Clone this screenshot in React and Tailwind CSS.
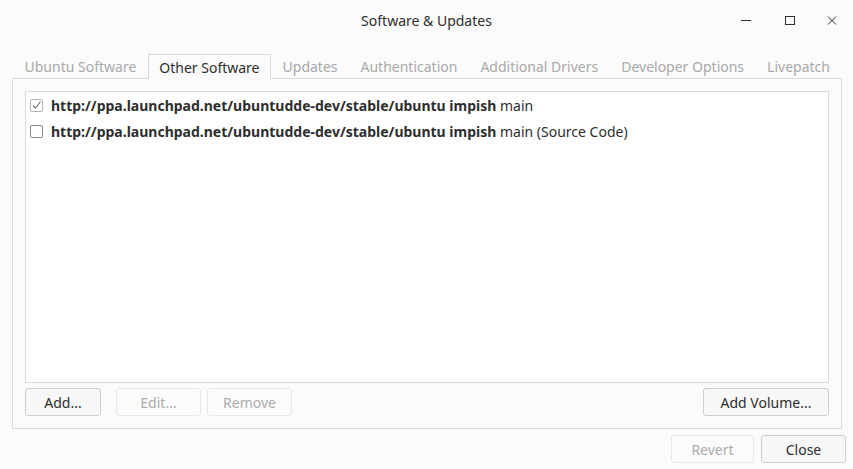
import React from "react";

const font = { fontFamily: '"Noto Sans", "Open Sans", sans-serif' };

function Tab({ label, active }) {
  if (active) {
    return (
      <div className="h-[25px] px-[10.5px] flex items-center border border-b-0 border-[#d8d8d8] bg-[#fbfbfb] text-[#2e2e2e] -mb-px relative z-10">
        {label}
      </div>
    );
  }
  return (
    <div className="h-[24px] px-[10.5px] flex items-center text-[#a9a9a9] border border-transparent">
      {label}
    </div>
  );
}

function Btn({ children, disabled, className = "" }) {
  return (
    <div
      className={
        "h-[28px] flex items-center justify-center rounded-[3px] border text-[14px] " +
        (disabled
          ? "border-[#e8e8e8] bg-[#fbfbfb] text-[#ababab] "
          : "border-[#cdcdcd] bg-[#f7f7f7] text-[#2e2e2e] ") +
        className
      }
    >
      {children}
    </div>
  );
}

export default function App() {
  return (
    <div
      className="w-[853px] h-[469px] bg-[#fbfbfb] flex flex-col text-[14px] text-[#2e2e2e] overflow-hidden"
      style={font}
    >
      {/* Title bar */}
      <div className="h-[40px] grid grid-cols-[1fr_auto_1fr] items-center">
        <div />
        <div className="text-[14px] text-[#2e2e2e]">Software &amp; Updates</div>
        <div className="flex justify-end items-center pr-[11px]">
          <svg width="20" height="20" viewBox="0 0 20 20">
            <line x1="5" y1="10.5" x2="15" y2="10.5" stroke="#2e2e2e" strokeWidth="1" />
          </svg>
          <svg width="20" height="20" viewBox="0 0 20 20" className="ml-[24px]">
            <rect x="5.5" y="6.5" width="9" height="8" fill="none" stroke="#2e2e2e" strokeWidth="1" />
          </svg>
          <svg width="20" height="20" viewBox="0 0 20 20" className="ml-[22px]">
            <path d="M6 6.5 L14 14.5 M14 6.5 L6 14.5" stroke="#2e2e2e" strokeWidth="1" />
          </svg>
        </div>
      </div>

      {/* Tabs */}
      <div className="mt-[14px] ml-[13px] flex items-end">
        <Tab label="Ubuntu Software" />
        <Tab label="Other Software" active />
        <Tab label="Updates" />
        <Tab label="Authentication" />
        <Tab label="Additional Drivers" />
        <Tab label="Developer Options" />
        <Tab label="Livepatch" />
      </div>

      {/* Frame */}
      <div className="mx-[12px] w-[830px] h-[351px] border border-[#dadada] flex flex-col px-[12px] pt-[12px] pb-[12px]">
        <div className="flex-1 bg-white border border-[#dadada] flex flex-col">
          <div className="h-[26px] flex items-center pl-[4px]">
            <div className="w-[13px] h-[13px] border border-[#b5b5b5] rounded-[2px] flex items-center justify-center mr-[8px]">
              <svg width="11" height="11" viewBox="0 0 11 11">
                <path d="M2 5.5 L4.5 8 L9.5 1.5" fill="none" stroke="#7a7a7a" strokeWidth="1.2" />
              </svg>
            </div>
            <span>
              <b className="font-bold">http://ppa.launchpad.net/ubuntudde-dev/stable/ubuntu impish</b> main
            </span>
          </div>
          <div className="h-[26px] flex items-center pl-[4px]">
            <div className="w-[13px] h-[13px] border border-[#8a8a8a] rounded-[2px] mr-[8px] bg-white" />
            <span>
              <b className="font-bold">http://ppa.launchpad.net/ubuntudde-dev/stable/ubuntu impish</b> main (Source Code)
            </span>
          </div>
        </div>
        <div className="mt-[5px] flex items-center">
          <Btn className="w-[76px]">Add...</Btn>
          <Btn disabled className="w-[85px] ml-[15px]">Edit...</Btn>
          <Btn disabled className="w-[85px] ml-[6px]">Remove</Btn>
          <div className="flex-1" />
          <Btn className="w-[126px]">Add Volume...</Btn>
        </div>
      </div>

      {/* Bottom buttons */}
      <div className="mt-[6px] flex justify-end pr-[7px] gap-[7px]">
        <Btn disabled className="w-[83px]">Revert</Btn>
        <Btn className="w-[85px]">Close</Btn>
      </div>
    </div>
  );
}
